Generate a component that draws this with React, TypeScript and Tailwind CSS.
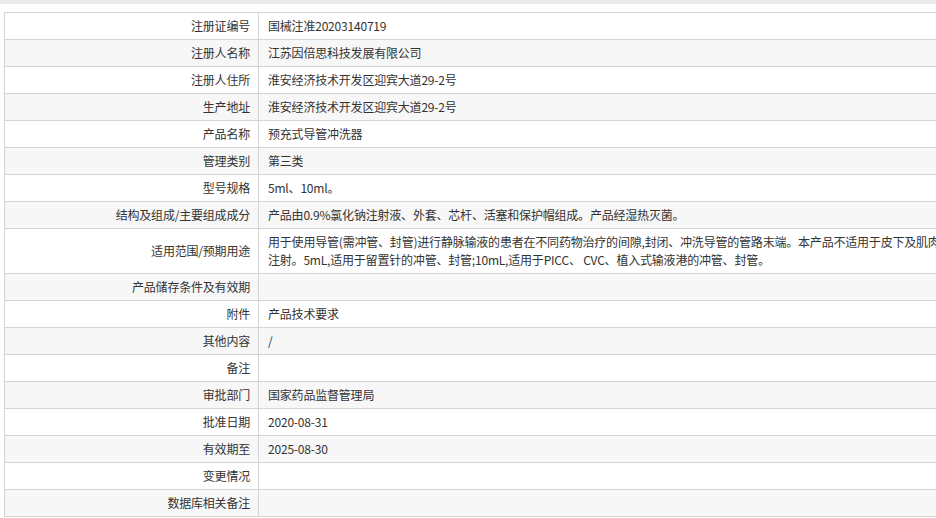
const rows: [string, string][] = [
  ["注册证编号", "国械注准20203140719"],
  ["注册人名称", "江苏因倍思科技发展有限公司"],
  ["注册人住所", "淮安经济技术开发区迎宾大道29-2号"],
  ["生产地址", "淮安经济技术开发区迎宾大道29-2号"],
  ["产品名称", "预充式导管冲洗器"],
  ["管理类别", "第三类"],
  ["型号规格", "5ml、10ml。"],
  ["结构及组成/主要组成成分", "产品由0.9%氯化钠注射液、外套、芯杆、活塞和保护帽组成。产品经湿热灭菌。"],
  [
    "适用范围/预期用途",
    "用于使用导管(需冲管、封管)进行静脉输液的患者在不同药物治疗的间隙,封闭、冲洗导管的管路末端。本产品不适用于皮下及肌肉注射。5mL,适用于留置针的冲管、封管;10mL,适用于PICC、 CVC、植入式输液港的冲管、封管。",
  ],
  ["产品储存条件及有效期", ""],
  ["附件", "产品技术要求"],
  ["其他内容", "/"],
  ["备注", ""],
  ["审批部门", "国家药品监督管理局"],
  ["批准日期", "2020-08-31"],
  ["有效期至", "2025-08-30"],
  ["变更情况", ""],
  ["数据库相关备注", ""],
];

export default function App() {
  return (
    <div
      className="w-[936px] h-[518px] overflow-hidden bg-white text-[12px] text-[#333]"
      style={{ fontFamily: '"Noto Sans CJK SC", "Noto Sans", sans-serif' }}
    >
      <div className="h-[4px] bg-[#ebebeb]" />
      <div className="pt-[8px] pl-[4px]">
        <div className="w-[940px] border-t border-l border-[#d4d4d4]">
          {rows.map(([k, v], i) => (
            <div
              key={k}
              className={`flex border-b border-[#d4d4d4] ${i % 2 ? "bg-[#f7f7f7]" : "bg-white"}`}
            >
              <div className="w-[254px] shrink-0 border-r border-[#d4d4d4] flex items-center justify-end pr-[8px] min-h-[26px] leading-[18px] tracking-[-0.2px]">
                {k}
              </div>
              <div className="flex-1 pl-[9px] pr-[10px] py-[4px] leading-[18px] min-h-[26px] flex items-center">
                <span className="w-[680px] tracking-[-0.2px]">{v}</span>
              </div>
            </div>
          ))}
        </div>
      </div>
    </div>
  );
}
